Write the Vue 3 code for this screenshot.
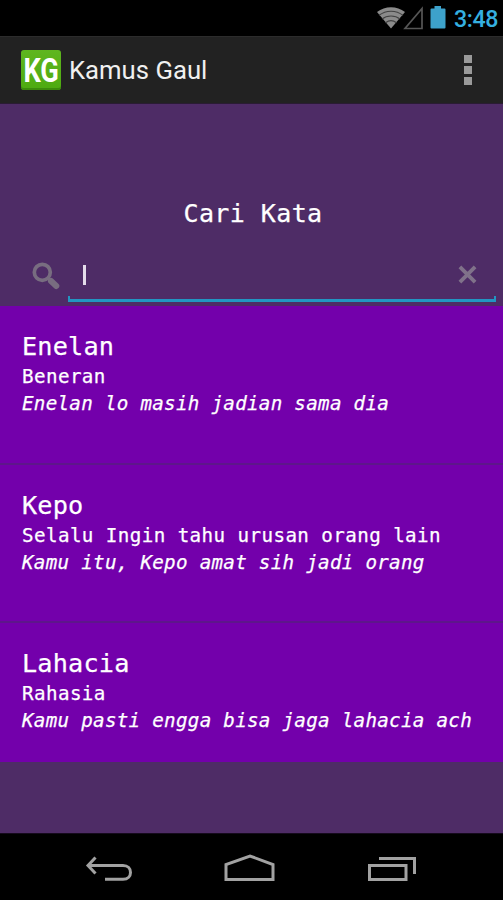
<template>
  <div class="screen">
    <header class="status-bar">
      <svg class="wifi" viewBox="0 0 28 22">
        <path class="wifi-base" d="M0 5C8-1.3 20-1.3 28 5L14 21.5Z" />
        <path class="wifi-gap" d="M2 8.3C9 2.8 19 2.8 26 8.3M5 12C10 8 18 8 23 12M8.5 15.8C12 13 16 13 19.5 15.8" />
      </svg>
      <svg class="signal" viewBox="0 0 21 24">
        <path d="M19 2.5V22.5H2Z" />
      </svg>
      <svg class="battery" viewBox="0 0 16 24">
        <path d="M4.5 0H11V2.5H14.5Q15.5 2.5 15.5 3.5V21.5Q15.5 22.5 14.5 22.5H1.5Q.5 22.5.5 21.5V3.5Q.5 2.5 1.5 2.5H4.5Z" />
      </svg>
      <span class="clock">3:48</span>
    </header>

    <div class="action-bar">
      <div class="logo"><span>KG</span></div>
      <h1>Kamus Gaul</h1>
      <button class="overflow" aria-label="Menu">
        <i v-for="n in 3" :key="n"></i>
      </button>
    </div>

    <main class="content">
      <h2>Cari Kata</h2>

      <div class="search">
        <svg class="search-icon" viewBox="0 0 30 30">
          <circle cx="11.3" cy="11.3" r="8" />
          <path class="neck" d="M16.5 16.5L20 20" />
          <path class="handle" d="M20 20L25.3 25" />
        </svg>
        <div class="field">
          <span class="caret"></span>
          <svg class="clear" viewBox="0 0 20 20">
            <path d="M2 2L18 18M18 2L2 18" />
          </svg>
        </div>
      </div>

      <ul class="words">
        <li v-for="item in words" :key="item.word">
          <div class="word">{{ item.word }}</div>
          <div class="meaning">{{ item.meaning }}</div>
          <div class="example">{{ item.example }}</div>
        </li>
      </ul>
    </main>

    <nav class="nav-bar">
      <svg class="back" viewBox="0 0 50 30">
        <path d="M4 11.5H39C49 11.5 49 25.3 39 25.3H21" />
        <path d="M11.5 3.5L4 11.5L11.5 19.5" />
      </svg>
      <svg class="home" viewBox="0 0 54 30">
        <path d="M3 25.5V10.5L27 2L50 10.5V25.5Z" />
      </svg>
      <svg class="recent" viewBox="0 0 50 30">
        <path d="M2.5 11.5H39V25.5H2.5Z" />
        <path d="M12 4.5H47.5V20" />
      </svg>
    </nav>
  </div>
</template>

<script setup>
import { ref } from "vue";

const words = ref([
  { word: "Enelan", meaning: "Beneran", example: "Enelan lo masih jadian sama dia" },
  {
    word: "Kepo",
    meaning: "Selalu Ingin tahu urusan orang lain",
    example: "Kamu itu, Kepo amat sih jadi orang"
  },
  { word: "Lahacia", meaning: "Rahasia", example: "Kamu pasti engga bisa jaga lahacia ach" }
]);
</script>

<style>
body {
  margin: 0;
  background: #000;
}
</style>

<style scoped>
.screen {
  width: 503px;
  height: 900px;
  display: flex;
  flex-direction: column;
  overflow: hidden;
  background: #000;
  font-family: Roboto, sans-serif;
  color: #fff;
}

svg {
  display: block;
  flex: none;
  fill: none;
}

.status-bar {
  height: 36px;
  flex: none;
  box-sizing: border-box;
  display: flex;
  align-items: flex-start;
  justify-content: flex-end;
  padding: 6px 5px 0 0;
}

.wifi {
  width: 28px;
  height: 22px;
  margin-top: 1px;
  margin-right: -2px;
}

.wifi-base {
  fill: #8b8b8b;
}

.wifi-gap {
  stroke: #424242;
  stroke-width: 1.1;
}

.signal {
  width: 21px;
  height: 24px;
  margin-right: 6px;
  stroke: #565656;
  stroke-width: 1.7;
}

.battery {
  width: 16px;
  height: 24px;
  margin-right: 8px;
  fill: #3da2cb;
}

.clock {
  font-size: 23.2px;
  font-weight: 500;
  line-height: 26px;
  color: #35b0e0;
  letter-spacing: -0.4px;
}

.action-bar {
  height: 68px;
  flex: none;
  box-sizing: border-box;
  display: flex;
  align-items: center;
  padding: 0 31px 0 21px;
  background: #222;
  border-top: 1px solid #2c2c2c;
  border-bottom: 1px solid #2a1c34;
}

.logo {
  width: 40px;
  height: 40px;
  display: flex;
  align-items: center;
  justify-content: center;
  border-radius: 3px;
  background: linear-gradient(#5fb61f, #4daa10);
  box-shadow: inset 0 -2px 0 #3c8a0c;
}

.logo span {
  font-size: 34px;
  font-weight: 700;
  line-height: 38px;
  transform: scaleX(0.8);
}

h1 {
  margin: 0 auto 0 8px;
  font-size: 25.7px;
  font-weight: 400;
  line-height: 32px;
  color: #f0f0f0;
}

.overflow {
  display: flex;
  flex-direction: column;
  gap: 3px;
  padding: 0;
  border: 0;
  background: none;
}

.overflow i {
  width: 8px;
  height: 8px;
  background: #9a9a9a;
}

.content {
  flex: 1;
  min-height: 0;
  display: flex;
  flex-direction: column;
  background: #4e2c66;
  font-family: "DejaVu Sans Mono", monospace;
  -webkit-text-stroke: 0.25px #fff;
}

h2 {
  margin: 93px 0 0 3px;
  font-size: 25px;
  font-weight: 400;
  line-height: 34px;
  letter-spacing: 0.4px;
  text-align: center;
}

.search {
  height: 75px;
  flex: none;
  display: flex;
  align-items: flex-start;
  padding: 17px 7px 4px 31px;
  box-sizing: border-box;
}

.search-icon {
  width: 30px;
  height: 30px;
  margin-top: 13px;
  stroke: #786d80;
  stroke-width: 3.7;
}

.search-icon .neck {
  stroke-width: 3;
}

.search-icon .handle {
  stroke-width: 6;
  stroke-linecap: round;
}

.field {
  flex: 1;
  height: 54px;
  box-sizing: border-box;
  display: flex;
  align-items: center;
  justify-content: space-between;
  margin-left: 7px;
  padding: 0 19px 1px 15px;
  background:
    linear-gradient(#2295c2, #2295c2) left bottom / 2px 6px no-repeat,
    linear-gradient(#2295c2, #2295c2) right bottom / 2px 6px no-repeat,
    linear-gradient(#2295c2, #2295c2) left bottom / 100% 3px no-repeat;
}

.caret {
  width: 3px;
  height: 20px;
  background: #e4dcea;
}

.clear {
  width: 19px;
  height: 19px;
  stroke: #80728a;
  stroke-width: 4;
}

.words {
  list-style: none;
  margin: 0;
  padding: 0;
  height: 456px;
  flex: none;
  overflow: hidden;
  background: #7300ab;
}

.words li {
  height: 158.5px;
  box-sizing: border-box;
  padding: 24px 0 0 22px;
  border-bottom: 2px solid #5e168b;
  white-space: nowrap;
}

.word {
  font-size: 25.2px;
  line-height: 33px;
  letter-spacing: 0.2px;
}

.meaning {
  font-size: 19.2px;
  line-height: 28px;
  letter-spacing: 0.42px;
}

.example {
  font-size: 19.2px;
  font-style: italic;
  line-height: 26px;
  letter-spacing: 0.29px;
}

.nav-bar {
  height: 67px;
  flex: none;
  display: flex;
  align-items: flex-start;
  padding: 20px 0 0 84px;
  box-sizing: border-box;
  border-top: 1px solid #150a1c;
  stroke: #a2a2a2;
  stroke-width: 3;
}

.back {
  width: 50px;
  height: 30px;
}

.home {
  width: 54px;
  height: 30px;
  margin-left: 89px;
}

.recent {
  width: 50px;
  height: 30px;
  margin-left: 90px;
}
</style>
